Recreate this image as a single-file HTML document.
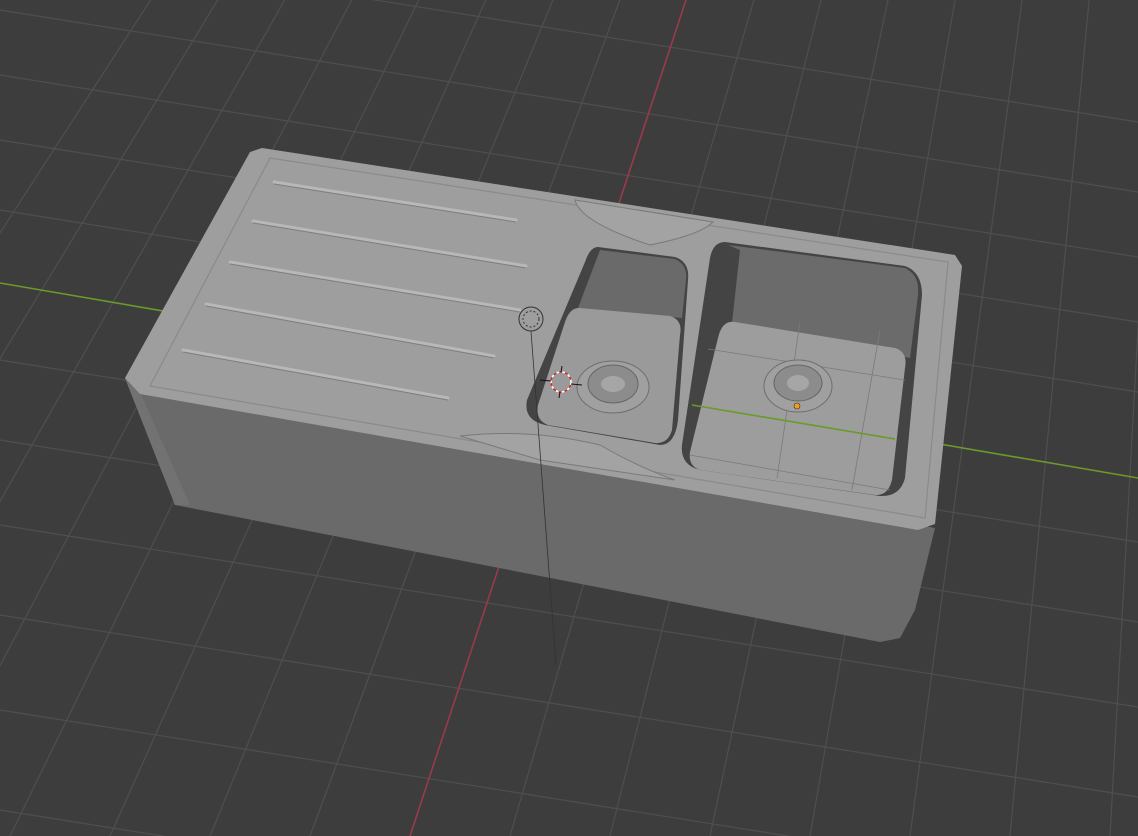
<!DOCTYPE html>
<html><head><style>
html,body{margin:0;padding:0;background:#3d3d3d;overflow:hidden;width:1138px;height:836px}
svg{display:block}
</style></head><body>
<svg width="1138" height="836" viewBox="0 0 1138 836" xmlns="http://www.w3.org/2000/svg">
<rect width="1138" height="836" fill="#3d3d3d"/>
<g stroke="#4f4f4f" stroke-width="1.2" fill="none">
<line x1="0" y1="-60" x2="1138" y2="122"/>
<line x1="0" y1="10" x2="1138" y2="192"/>
<line x1="0" y1="75" x2="1138" y2="257"/>
<line x1="0" y1="140" x2="1138" y2="322"/>
<line x1="0" y1="210" x2="1138" y2="392"/>
<line x1="0" y1="360" x2="1138" y2="542"/>
<line x1="0" y1="440" x2="1138" y2="622"/>
<line x1="0" y1="525" x2="1138" y2="707"/>
<line x1="0" y1="615" x2="1138" y2="797"/>
<line x1="0" y1="710" x2="1138" y2="892"/>
<line x1="0" y1="810" x2="1138" y2="992"/>
<line x1="-390" y1="836" x2="1250" y2="-1700"/>
<line x1="-290" y1="836" x2="1250" y2="-1700"/>
<line x1="-190" y1="836" x2="1250" y2="-1700"/>
<line x1="-90" y1="836" x2="1250" y2="-1700"/>
<line x1="10" y1="836" x2="1250" y2="-1700"/>
<line x1="110" y1="836" x2="1250" y2="-1700"/>
<line x1="210" y1="836" x2="1250" y2="-1700"/>
<line x1="310" y1="836" x2="1250" y2="-1700"/>
<line x1="510" y1="836" x2="1250" y2="-1700"/>
<line x1="610" y1="836" x2="1250" y2="-1700"/>
<line x1="710" y1="836" x2="1250" y2="-1700"/>
<line x1="810" y1="836" x2="1250" y2="-1700"/>
<line x1="910" y1="836" x2="1250" y2="-1700"/>
<line x1="1010" y1="836" x2="1250" y2="-1700"/>
<line x1="1110" y1="836" x2="1250" y2="-1700"/>
<line x1="1210" y1="836" x2="1250" y2="-1700"/>
</g>
<line x1="686" y1="0" x2="410" y2="836" stroke="#9a3a4a" stroke-width="1.6"/>
<line x1="0" y1="283" x2="1138" y2="478" stroke="#6a9a2a" stroke-width="1.6"/>
<polygon points="125,378 935,528 915,610 900,638 880,642 175,505" fill="#6a6a6a"/>
<polygon points="125,378 140,392 190,505 175,505" fill="#727272"/>
<polygon points="250,152 262,148 955,255 962,266 935,524 918,530 140,394 125,378" fill="#9e9e9e"/>
<polygon points="270,158 948,262 925,518 150,386" fill="none" stroke="#8a8a8a" stroke-width="1.2"/>
<g stroke="#b8b8b8" stroke-width="3" stroke-linecap="round">
<line x1="274" y1="182" x2="516" y2="220"/>
<line x1="253" y1="221" x2="526" y2="266"/>
<line x1="230" y1="262" x2="520" y2="310"/>
<line x1="206" y1="304" x2="494" y2="356"/>
<line x1="183" y1="350" x2="448" y2="398"/>
</g>
<g stroke="#7e7e7e" stroke-width="1">
<line x1="274" y1="184" x2="516" y2="222"/>
<line x1="253" y1="223" x2="526" y2="268"/>
<line x1="230" y1="264" x2="520" y2="312"/>
<line x1="206" y1="306" x2="494" y2="358"/>
<line x1="183" y1="352" x2="448" y2="400"/>
</g>
<path d="M575,200 Q580,222 650,245 Q700,235 713,222 Z" fill="#a3a3a3" stroke="#7a7a7a"/>
<path d="M460,436 Q530,428 600,445 Q640,468 675,480 L540,460 Z" fill="#a3a3a3" stroke="#7a7a7a"/>
<path d="M598,247 L675,257 Q690,262 688,280 L678,420 Q675,445 660,445 L545,425 Q523,420 527,400 L585,262 Q590,247 598,247 Z" fill="#444"/>
<path d="M600,250 L675,259 Q688,265 686,280 L682,318 L578,308 Z" fill="#6a6a6a"/>
<path d="M580,308 L670,316 Q683,320 680,335 L672,430 Q668,444 655,443 L548,425 Q535,420 538,405 L565,322 Q570,307 580,308 Z" fill="#9a9a9a"/>
<ellipse cx="613" cy="387" rx="36" ry="26" fill="#a0a0a0" stroke="#6e6e6e"/>
<ellipse cx="613" cy="384" rx="25" ry="19" fill="#8c8c8c" stroke="#666"/>
<ellipse cx="613" cy="384" rx="12" ry="8" fill="#a6a6a6"/>
<path d="M725,242 L905,266 Q922,272 922,295 L905,478 Q900,497 880,496 L700,470 Q680,465 682,445 L710,258 Q713,242 725,242 Z" fill="#444"/>
<path d="M728,245 L905,268 Q920,275 918,295 L910,358 L732,323 L740,250 Z" fill="#6b6b6b"/>
<path d="M735,322 L895,348 Q908,352 905,368 L892,480 Q888,496 875,495 L700,470 Q688,466 690,452 L718,338 Q722,320 735,322 Z" fill="#9d9d9d"/>
<g stroke="#7a7a7a" stroke-width="0.8">
<line x1="708" y1="349" x2="905" y2="380"/>
<line x1="690" y1="455" x2="890" y2="490"/>
<line x1="800" y1="322" x2="777" y2="478"/>
<line x1="880" y1="330" x2="852" y2="490"/>
</g>
<ellipse cx="798" cy="386" rx="34" ry="26" fill="#a0a0a0" stroke="#6e6e6e"/>
<ellipse cx="798" cy="383" rx="24" ry="18" fill="#8c8c8c" stroke="#666"/>
<ellipse cx="798" cy="383" rx="11" ry="8" fill="#a6a6a6"/>
<line x1="692" y1="405" x2="895" y2="439" stroke="#6a9a2a" stroke-width="1.6"/>
<circle cx="797" cy="406" r="3" fill="#f39a1c" stroke="#333" stroke-width="0.6"/>
<circle cx="531" cy="319" r="12" fill="none" stroke="#333" stroke-width="1"/>
<circle cx="531" cy="319" r="8" fill="none" stroke="#333" stroke-dasharray="2,2"/>
<line x1="531" y1="331" x2="556" y2="665" stroke="#333" stroke-width="0.8"/>
<circle cx="561" cy="382" r="10" fill="none" stroke="#fff" stroke-width="1.5" stroke-dasharray="3,3"/>
<circle cx="561" cy="382" r="10" fill="none" stroke="#d22" stroke-width="1.5" stroke-dasharray="3,3" stroke-dashoffset="3"/>
<g stroke="#111" stroke-width="1"><line x1="540" y1="380" x2="551" y2="381"/><line x1="571" y1="384" x2="582" y2="385"/><line x1="562" y1="366" x2="561" y2="372"/><line x1="560" y1="392" x2="559" y2="398"/></g>
</svg>
</body></html>
